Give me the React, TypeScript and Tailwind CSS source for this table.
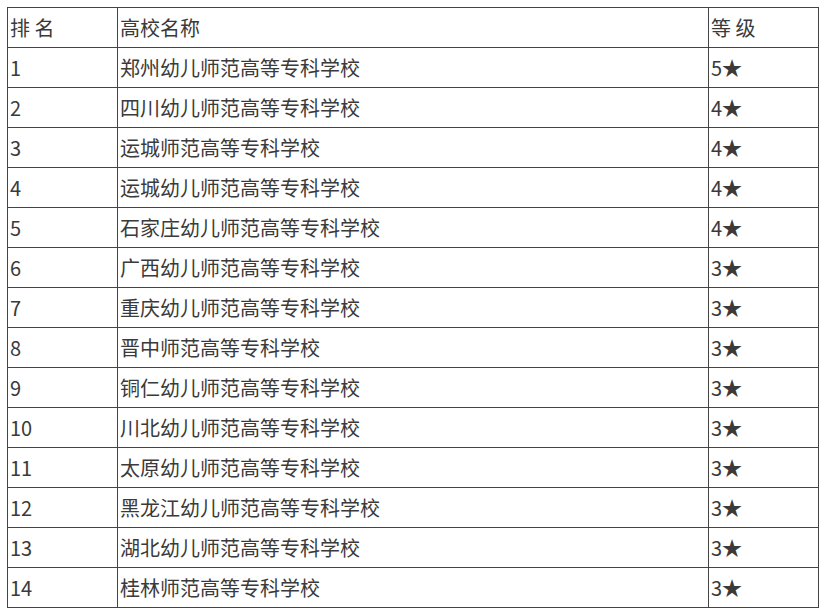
const ROWS: [string, string, string][] = [
  ["1", "郑州幼儿师范高等专科学校", "5★"],
  ["2", "四川幼儿师范高等专科学校", "4★"],
  ["3", "运城师范高等专科学校", "4★"],
  ["4", "运城幼儿师范高等专科学校", "4★"],
  ["5", "石家庄幼儿师范高等专科学校", "4★"],
  ["6", "广西幼儿师范高等专科学校", "3★"],
  ["7", "重庆幼儿师范高等专科学校", "3★"],
  ["8", "晋中师范高等专科学校", "3★"],
  ["9", "铜仁幼儿师范高等专科学校", "3★"],
  ["10", "川北幼儿师范高等专科学校", "3★"],
  ["11", "太原幼儿师范高等专科学校", "3★"],
  ["12", "黑龙江幼儿师范高等专科学校", "3★"],
  ["13", "湖北幼儿师范高等专科学校", "3★"],
  ["14", "桂林师范高等专科学校", "3★"],
];

const cell = "border border-[#444] h-10 px-[2px] py-0 align-middle text-left font-normal";

export default function App() {
  return (
    <div
      className="w-[826px] h-[615px] bg-white pl-[7px] pt-[7px] text-[#3a3a3a] text-[20px] leading-none"
      style={{ fontFamily: '"Microsoft YaHei", "Noto Sans CJK SC", "Noto Sans", sans-serif' }}
    >
      <table className="border-collapse w-[811px] table-fixed border border-[#444]">
        <colgroup>
          <col className="w-[110px]" />
          <col className="w-[591px]" />
          <col className="w-[110px]" />
        </colgroup>
        <thead>
          <tr>
            <th className={cell}>排 名</th>
            <th className={cell}>高校名称</th>
            <th className={cell}>等 级</th>
          </tr>
        </thead>
        <tbody>
          {ROWS.map(([rank, name, grade]) => (
            <tr key={rank}>
              <td className={cell}>{rank}</td>
              <td className={cell}>{name}</td>
              <td className={cell}>{grade}</td>
            </tr>
          ))}
        </tbody>
      </table>
    </div>
  );
}
